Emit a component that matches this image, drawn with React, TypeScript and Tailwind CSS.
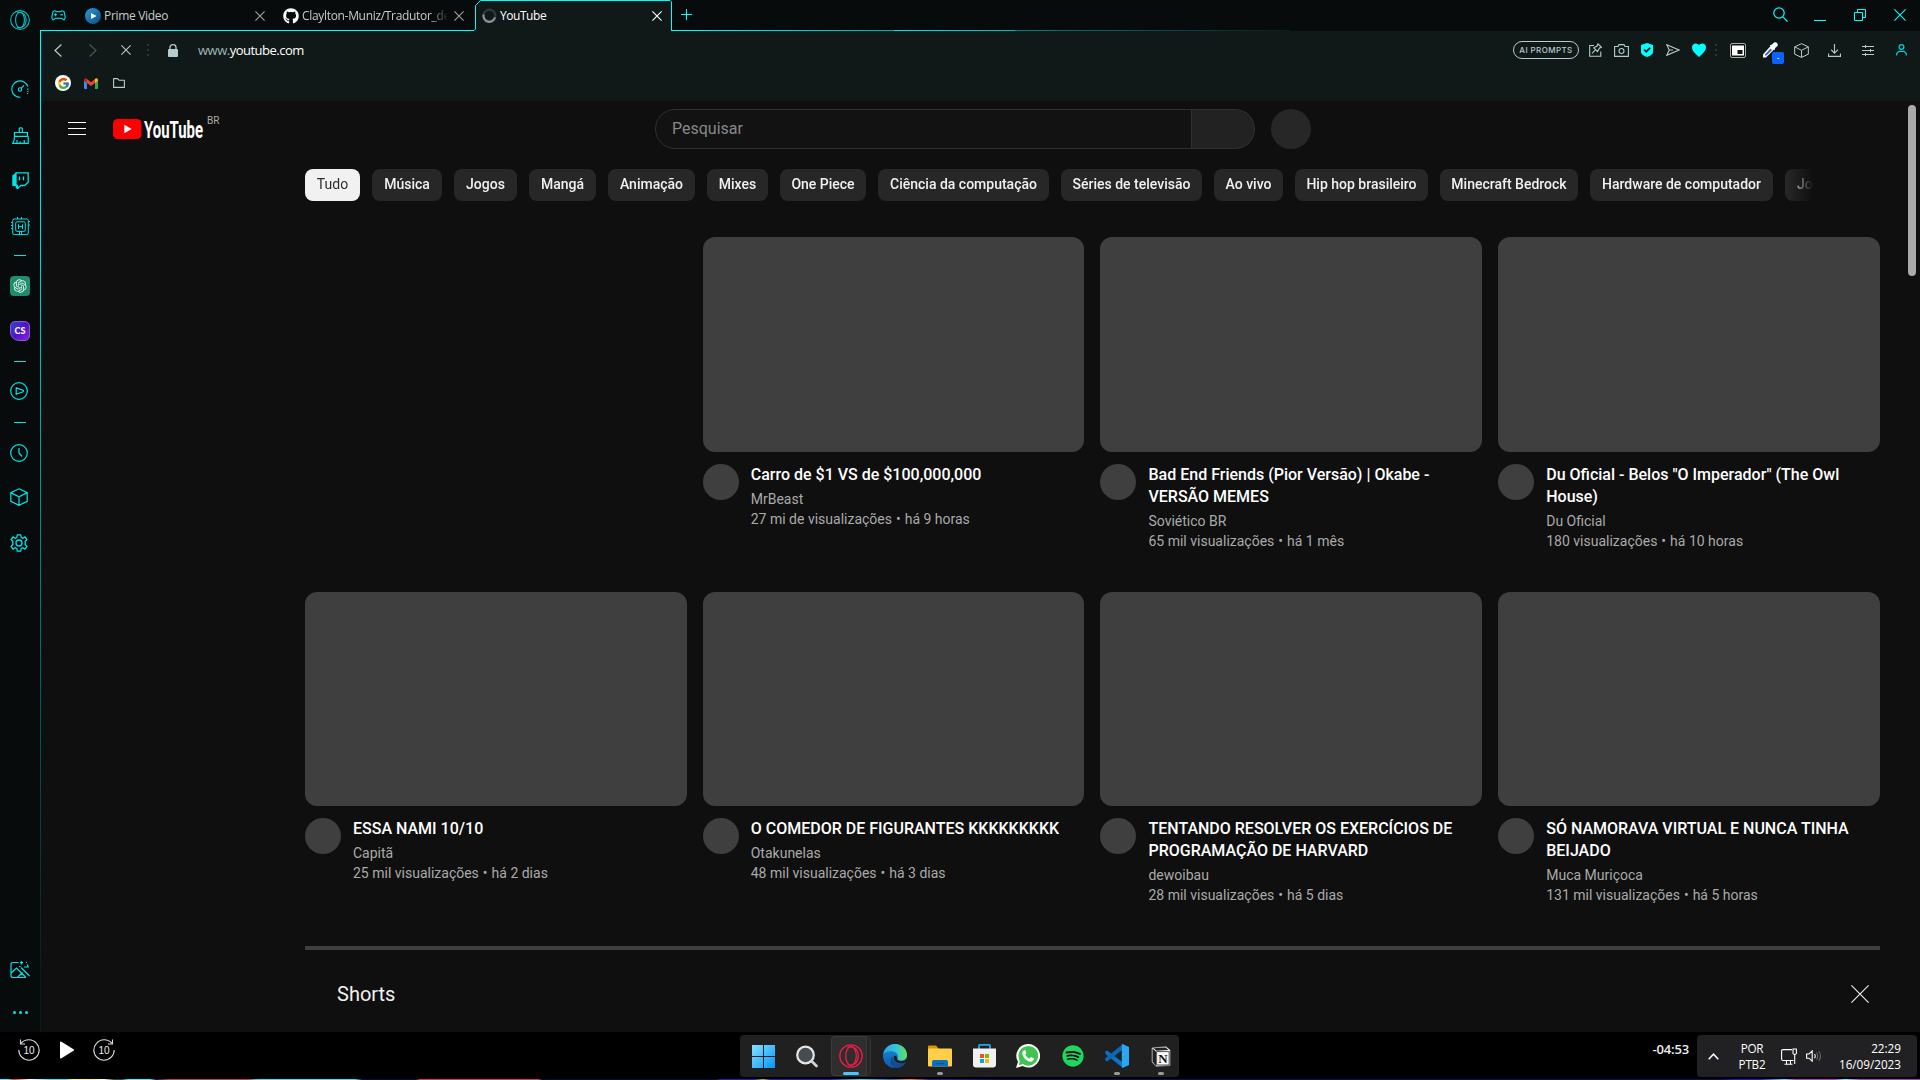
import React from "react";
import { FcGoogle } from "react-icons/fc";
import { FaGithub, FaSpotify } from "react-icons/fa";
import { RiOpenaiFill } from "react-icons/ri";

const ui = "font-['Open_Sans','Noto_Sans',sans-serif]";

function Cell({ className, children }: { className: string; children?: React.ReactNode }) {
  return <div className={`flex shrink-0 items-center justify-center ${className}`}>{children}</div>;
}

type SvgProps = { w: number; h?: number; sw?: number; className?: string; children: React.ReactNode; vb?: string };
/** Line drawing whose view box equals its pixel size. */
function Line({ w, h = w, sw = 1.1, className = "", children, vb }: SvgProps) {
  return (
    <svg width={w} height={h} viewBox={vb ?? `0 0 ${w} ${h}`} fill="none" stroke="currentColor" strokeWidth={sw} className={`shrink-0 ${className}`}>
      {children}
    </svg>
  );
}

const Dash = () => <div className="h-px w-3 bg-[#00e5e8]" />;

const Cross = ({ s = 10, sw = 1.1 }: { s?: number; sw?: number }) => (
  <Line w={s} sw={sw}>
    <path d={`M.4 .4L${s - 0.4} ${s - 0.4}M${s - 0.4} .4L.4 ${s - 0.4}`} />
  </Line>
);

const Cube = ({ s = 18 }: { s?: number }) => (
  <Line w={s} vb="0 0 18 18" sw={1.2}>
    <path d="M9 .8L17.2 4.6V13.4L9 17.3L.8 13.4V4.6ZM.8 4.6L9 8.8L17.2 4.6M9 8.8V17.3" />
  </Line>
);

const OperaRing = ({ s, className }: { s: number; className: string }) => (
  <Line w={s} vb="0 0 24 24" sw={1.3} className={className}>
    <circle cx="12" cy="12" r="11.2" />
    <ellipse cx="12" cy="12" rx="5.300" ry="9.300" />
    <path d="M8.500 3.700C13 1 19.300 4.500 19.300 12S13 23 8.500 20.300" />
  </Line>
);

function Sidebar() {
  return (
    <aside className="flex w-10 shrink-0 flex-col bg-[#070b0c] text-[#00e5e8]">
      <Cell className="h-10"><OperaRing s={20} className="text-[#00c4c8]" /></Cell>
      <Cell className="mt-[26px] h-[46px] pr-px">
        <Line w={18}>
          <path d="M9.5 17.300A8.200 8.200 0 1 1 16.800 6.500M16.900 8.500V9.900M16.900 11V12M16.500 13V14" />
          <circle cx="9" cy="9.500" r="1.7" />
          <path d="M10.200 8.200L12.900 5.500" />
        </Line>
      </Cell>
      <Cell className="h-[46px]">
        <Line w={17} sw={1.2}>
          <path d="M7.300 5.500V1.500C7.300 .7 10.300 .7 10.300 1.500V5.500M2.500 5.500H15.500V9.300H2.500ZM2.500 9.300C2.500 12.500 2 14.500 .9 16.300H16.200V9.300M5 16V13M8.200 16V14.500M12.200 16V13" />
        </Line>
      </Cell>
      <Cell className="h-[45px]">
        <Line w={17} sw={1.3}>
          <path d="M4 .8H16.200V10.200L12.500 13.500H9L5.500 16.500V13.500H4Z" />
          <path d="M.3 3.500L4 .8V12.500L6 13.500L5.500 16.500H3.800V14H.3Z" fill="currentColor" stroke="none" />
          <path d="M7.500 4.500V8.200M11.500 4.500V8.200" />
        </Line>
      </Cell>
      <Cell className="h-[46px] pl-px">
        <Line w={19} sw={1}>
          <rect x="1.700" y="2" width="15.600" height="15.600" rx="1.500" />
          <rect x="4.700" y="4.800" width="9.600" height="9.600" rx="1.500" />
          <path d="M7.500 7.300V12M11.500 7.300V12M7.500 9.600H11.500M6.500 0V2M10.500 0V2M0 5.500H1.700M0 8.500H1.700M0 11.500H1.700M17.300 4.500H19M17.300 8H19M8.500 14.400V17.500M10.500 14.400V17.500" />
        </Line>
      </Cell>
      <Cell className="h-[13px]"><Dash /></Cell>
      <Cell className="h-[47px]">
        <div className="flex size-5 items-center justify-center rounded-[4px] bg-[#1f8d6d] text-[#e3f4ee]"><RiOpenaiFill size={16} /></div>
      </Cell>
      <Cell className="h-[43px]">
        <div className="flex size-5 items-center justify-center rounded-[5px] rounded-bl-[9px] border border-[#8d55d8] bg-linear-to-br from-[#2741cf] via-[#4d12c4] to-[#8d1fdc] font-[Lato] text-[9px] font-black leading-none text-white">CS</div>
      </Cell>
      <Cell className="h-[18px]"><Dash /></Cell>
      <Cell className="h-[42px] pr-[2px]">
        <Line w={18} sw={1.2}><circle cx="9" cy="9" r="8.300" /><path d="M6.200 5.800V12.200L13.300 9.800V8.400Z" strokeLinejoin="round" /></Line>
      </Cell>
      <Cell className="h-[20px]"><Dash /></Cell>
      <Cell className="h-[41px] pr-[2px]">
        <Line w={18} sw={1.2}><circle cx="9" cy="9" r="8.300" /><path d="M9 4V9L12 12.500" /></Line>
      </Cell>
      <Cell className="h-[48px] pr-[2px]"><Cube /></Cell>
      <Cell className="h-[42px] pr-[2px] pt-px">
        <Line w={18} sw={1.3}>
          <circle cx="9" cy="9" r="3" />
          <path strokeLinejoin="round" d="M7.300 .9H10.700L11.200 3.500L12.800 4.300L15 2.900L16.900 5.500L15.200 7.500V10.500L16.900 12.500L15 15.100L12.800 13.700L11.200 14.500L10.700 17.100H7.300L6.800 14.500L5.200 13.700L3 15.100L1.100 12.500L2.800 10.500V7.500L1.100 5.500L3 2.900L5.200 4.300L6.800 3.500Z" />
        </Line>
      </Cell>
      <Cell className="mt-auto h-[44px]">
        <Line w={20} h={18} sw={1.2}>
          <path d="M8.500 1.500H3Q1 1.500 1 3.500V14.500Q1 16.500 3 16.500H16M1.200 12L6.500 7L15.500 16M7.500 16.300L12.500 11.500M11 6.500L19.500 15M17.700 3.500V6M11.500 0V3.500M10 1.700H13M16 1.500H17M9 5.500H10.500M14 6H19" />
        </Line>
      </Cell>
      <Cell className="h-10 gap-[3px]">
        <i className="size-[3px] rounded-full bg-current" /><i className="size-[3px] rounded-full bg-current" /><i className="size-[3px] rounded-full bg-current" />
      </Cell>
    </aside>
  );
}

function TabBar() {
  return (
    <div className={`relative flex h-[31px] items-center bg-[#070b0c] text-[12px] tracking-[-0.32px] text-[#c5cbcb] ${ui}`}>
      <svg className="absolute left-0 top-0" width="1260" height="31" fill="none">
        <defs>
          <linearGradient id="glow" x1="631" x2="1250" y1="0" y2="0" gradientUnits="userSpaceOnUse">
            <stop offset="0" stopColor="#00ffff" />
            <stop offset=".36" stopColor="#00a9aa" />
            <stop offset=".3601" stopColor="#00e6e8" />
            <stop offset=".555" stopColor="#00b4b4" />
            <stop offset=".5551" stopColor="#00807f" />
            <stop offset="1" stopColor="#0a1d1d" />
          </linearGradient>
        </defs>
        <path d="M435.500 31V6L440.500 .5H631V31Z" fill="#111918" />
        <path d="M0 30.500H434L435.500 29V5.500L440.500 .5H630L631.500 2V30.500" stroke="#00ffff" />
        <rect x="631" y="30" width="619" height="1" fill="url(#glow)" />
      </svg>
      <Cell className="w-[37px] text-[#00ced2]">
        <Line w={15} h={11} sw={1.2}>
          <path d="M4 .8L5.500 1.700H9.500L11 .8L13 1.500L14.300 7.500L13 10L10.500 8.300H4.500L2 10L.7 7.500L2 1.500Z" strokeLinejoin="round" />
          <path d="M4.500 3.200V6.200M3 4.700H6M10 4V5.500M11.300 4V5.500" />
        </Line>
      </Cell>
      <div className="ml-[8px] flex size-4 items-center justify-center rounded-full bg-linear-to-br from-[#2b9ddd] to-[#0c4b80]">
        <svg width="7" height="8"><path d="M1 1L6.500 4L1 7Z" fill="#fff" /></svg>
      </div>
      <span className="ml-[3px] w-[150px]">Prime Video</span>
      <Cell className="w-[12px] text-[#9aa3a3]"><Cross /></Cell>
      <FaGithub size={16} className="ml-[17px] text-white" />
      <span className="ml-[3px] w-[146px] overflow-hidden whitespace-nowrap tracking-[-0.32px] mask-r-from-88% mask-r-to-100%">Claylton-Muniz/Tradutor_de</span>
      <Cell className="ml-[5px] w-[12px] text-[#9aa3a3]"><Cross /></Cell>
      <div className="relative ml-[17px] flex w-[189px] items-center text-white">
        <svg width="15" height="15" fill="none" strokeWidth="2.2"><circle cx="7.500" cy="7.500" r="5.800" stroke="#303a39" /><path d="M1.700 6.500A5.800 5.800 0 0 0 13 9.500" stroke="#8c9493" /></svg>
        <span className="ml-[3px] w-[151px] tracking-[-0.45px]">YouTube</span>
        <Cell className="w-[12px]"><Cross /></Cell>
      </div>
      <Cell className="relative w-[30px] pb-[3px] text-[#00ffff]"><Line w={11} sw={1}><path d="M0 5.500H11M5.500 0V11" /></Line></Cell>
      <div className="ml-auto flex h-full text-[#00ffff]">
        <Cell className="w-10 pb-[3px]"><Line w={15} sw={1.2}><circle cx="6" cy="6" r="5.200" /><path d="M9.800 9.800L14.500 14.500" /></Line></Cell>
        <Cell className="w-10 pt-[10px]"><div className="h-px w-3 bg-current" /></Cell>
        <Cell className="w-10 pb-px"><Line w={12} sw={1}><path d="M.5 3.500H8.500V11.500H.5ZM3.500 3.500V.5H11.500V8.500H8.500" /></Line></Cell>
        <Cell className="w-10 pb-px"><Cross s={12} /></Cell>
      </div>
    </div>
  );
}

const Dots = ({ className }: { className: string }) => (
  <Cell className={`flex-col gap-[3px] ${className}`}>
    <i className="size-[2px] bg-[#293634]" /><i className="size-[2px] bg-[#293634]" /><i className="size-[2px] bg-[#293634]" />
  </Cell>
);

function Toolbar() {
  return (
    <div className="flex h-[70px] shrink-0 flex-col bg-[#111918] text-[#b4cccb]">
      <div className="flex h-[38px] items-center">
        <Cell className="w-[34px]"><Line w={8} h={13} sw={1.2}><path d="M7.400 .5L1 6.500L7.400 12.500" /></Line></Cell>
        <Cell className="w-[36px] text-[#495554]"><Line w={8} h={13} sw={1.2}><path d="M.6 .5L7 6.500L.6 12.500" /></Line></Cell>
        <Cell className="w-[30px]"><Cross s={10} /></Cell>
        <Dots className="w-[14px]" />
        <Cell className="w-[36px]">
          <svg width="10" height="13" fill="currentColor"><rect y="5" width="10" height="8" rx="1" /><path d="M2 6V3.500Q2 .7 5 .7T8 3.500V6" fill="none" stroke="currentColor" strokeWidth="1.300" /></svg>
        </Cell>
        <span className={`ml-[7px] pt-px text-[13px] tracking-[-0.5px] text-[#9db5b4] ${ui}`}>www.<span className="text-white">youtube.com</span></span>
        <div className="ml-auto flex items-center pr-[4px]">
          <div className="mr-[3px] flex h-[18px] w-[66px] items-center justify-center rounded-full border border-[#b4cccb] font-[Inter] text-[8px] font-medium tracking-[0.4px]">AI PROMPTS</div>
          <Cell className="w-[26px]"><Line w={13} h={14}><path d="M5 2.500H.7V13.200H11.800V8.500M9 .8L12.500 4.300L10.500 5L8.500 8.500L4.800 4.800L8.300 2.800ZM6.600 6.700L3 10.300" /></Line></Cell>
          <Cell className="w-[26px]"><Line w={15} h={13}><path d="M.6 2.500H4L5 .6H10L11 2.500H14.400V12.400H.6Z" /><circle cx="7.500" cy="7" r="2.500" /></Line></Cell>
          <Cell className="w-[26px]"><svg width="12" height="14"><path d="M6 0L12 2V9Q12 12 6 14Q0 12 0 9V2Z" fill="#00ffff" /><path d="M3 6.500L5.200 8.700L9.200 4.700" fill="none" stroke="#111918" strokeWidth="1.700" /></svg></Cell>
          <Cell className="w-[26px]"><Line w={14} h={12}><path d="M.8 .7L13 6L.8 11.300L3.200 6ZM3.200 6H7" /></Line></Cell>
          <Cell className="w-[26px]"><svg width="14" height="14"><path d="M7 14C2.500 10 0 7.500 0 4.300C0 1.800 1.800 .5 3.700 .5C5.200 .5 6.300 1.300 7 2.300C7.700 1.300 8.800 .5 10.300 .5C12.200 .5 14 1.800 14 4.300C14 7.500 11.500 10 7 14Z" fill="#00ffff" /></svg></Cell>
          <Dots className="w-[8px]" />
          <Cell className="w-[36px]"><svg width="16" height="15"><rect x=".5" y=".5" width="15" height="14" rx="1.500" fill="#111" stroke="#aaa" /><rect x="2" y="2.500" width="12" height="10" fill="#fff" /><rect x="7.500" y="7" width="5" height="4" fill="#111" /></svg></Cell>
          <Cell className="relative w-[28px]">
            <svg width="16" height="16"><path d="M9 3.500L12.500 7L4 15.500H1V12.500Z" fill="#fff" /><path d="M8.500 6.500L10 8L4.500 13.500H3V12.500Z" fill="#3565b8" /><path d="M7.800 3.200L10 2.500L12 .5Q14 -.2 15.200 1.200T15.300 4.200L13.200 6L12.500 8.200Z" fill="#fff" /></svg>
            <span className="absolute left-4 top-[10px] flex size-3 items-center justify-center rounded-[2px] bg-[#0d63ff] text-[8px] leading-none text-white">-</span>
          </Cell>
          <Cell className="w-[34px]"><Cube s={15} /></Cell>
          <Cell className="w-[32px]"><Line w={13} h={13}><path d="M6.500 0V9M3 5.700L6.500 9.200L10 5.700M.5 9.500V12.400H12.500V9.500" /></Line></Cell>
          <Cell className="w-[36px]"><Line w={12} h={11} sw={1}><path d="M0 1.500H12M0 5.500H12M0 9.500H12M3.500 0V3M8.500 4V7M3.500 8V11" /></Line></Cell>
          <Cell className="w-[30px] text-[#00d2d4]"><Line w={11} h={12} sw={1.2}><circle cx="5.500" cy="3" r="2.400" /><path d="M.7 11.500V9.500L3 7.300H8L10.300 9.500V11.500" /></Line></Cell>
        </div>
      </div>
      <div className="flex h-7 items-center pl-[14px]">
        <div className="flex size-4 items-center justify-center rounded-full bg-white"><FcGoogle size={13} /></div>
        <svg width="14" height="11" viewBox="0 0 14 11" className="ml-[13px]">
          <path d="M0 2V10Q0 11 1 11H3V4.500Z" fill="#4285f4" /><path d="M14 2V10Q14 11 13 11H11V4.500Z" fill="#34a853" />
          <path d="M3 1L7 4.200L11 1V5L7 8L3 5Z" fill="#ea4335" /><path d="M0 2Q0 0 2 .2L3 1V5L0 2.800Z" fill="#c5221f" /><path d="M14 2Q14 0 12 .2L11 1V5L14 2.800Z" fill="#fbbc04" />
        </svg>
        <Line w={12} h={10} className="ml-[15px]"><path d="M.6 9.400V.6H4.500L6 2.200H11.400V9.400Z" strokeLinejoin="round" /></Line>
      </div>
    </div>
  );
}

function Masthead() {
  return (
    <header className="flex h-14 shrink-0 items-center pl-[27px]">
      <div className="mb-[2px] flex h-[13px] w-[18px] flex-col justify-between"><i className="h-px bg-white" /><i className="h-px bg-white" /><i className="h-px bg-white" /></div>
      <svg width="91" height="30" className="ml-[27px]">
        <rect y="5" width="28.500" height="20" rx="4.500" fill="#f00" /><path d="M11.300 10.700V19.300L18.700 15Z" fill="#fff" />
        <text x="31" y="23.500" fontFamily="Roboto" fontWeight="700" fontSize="24" fill="#fff" textLength="59" lengthAdjust="spacingAndGlyphs">YouTube</text>
      </svg>
      <span className="mb-[17px] ml-[3px] w-[13px] text-[10px] leading-none text-[#aaa]">BR</span>
      <div className="ml-[435px] flex h-10 w-[600px]">
        <div className="flex w-[537px] items-center rounded-l-full border border-[#303030] bg-[#121212] pl-4 text-[16px] text-[#888]">Pesquisar</div>
        <div className="w-[63px] rounded-r-full border border-l-0 border-[#303030] bg-[#222]" />
      </div>
      <div className="ml-4 size-10 rounded-full bg-[#272727]" />
    </header>
  );
}

const chips: [string, string][] = [
  ["Música", "w-[70px]"], ["Jogos", "w-[63px]"], ["Mangá", "w-[67px]"], ["Animação", "w-[87px]"], ["Mixes", "w-[61px]"],
  ["One Piece", "w-[86px]"], ["Ciência da computação", "w-[171px]"], ["Séries de televisão", "w-[141px]"], ["Ao vivo", "w-[69px]"],
  ["Hip hop brasileiro", "w-[133px]"], ["Minecraft Bedrock", "w-[138px]"], ["Hardware de computador", "w-[183px]"], ["Jogos", "w-[63px]"],
];

type Video = { title: string; channel: string; views: string; age: string };
const videos: (Video | null)[] = [
  null,
  { title: "Carro de $1 VS de $100,000,000", channel: "MrBeast", views: "27 mi de visualizações", age: "há 9 horas" },
  { title: "Bad End Friends (Pior Versão) | Okabe -\nVERSÃO MEMES", channel: "Soviético BR", views: "65 mil visualizações", age: "há 1 mês" },
  { title: "Du Oficial - Belos \"O Imperador\" (The Owl\nHouse)", channel: "Du Oficial", views: "180 visualizações", age: "há 10 horas" },
  { title: "ESSA NAMI 10/10", channel: "Capitã", views: "25 mil visualizações", age: "há 2 dias" },
  { title: "O COMEDOR DE FIGURANTES KKKKKKKKK", channel: "Otakunelas", views: "48 mil visualizações", age: "há 3 dias" },
  { title: "TENTANDO RESOLVER OS EXERCÍCIOS DE\nPROGRAMAÇÃO DE HARVARD", channel: "dewoibau", views: "28 mil visualizações", age: "há 5 dias" },
  { title: "SÓ NAMORAVA VIRTUAL E NUNCA TINHA\nBEIJADO", channel: "Muca Muriçoca", views: "131 mil visualizações", age: "há 5 horas" },
];

function VideoCard({ video }: { video: Video | null }) {
  if (!video) return <div />;
  return (
    <article>
      <div className="h-[214.700px] rounded-xl bg-[#3f3f3f]" />
      <div className="mt-3 flex gap-3">
        <div className="size-9 shrink-0 rounded-full bg-[#3f3f3f]" />
        <div className="whitespace-pre">
          <h3 className="text-[16px] font-medium leading-[22px] text-white">{video.title}</h3>
          <p className="mt-[3px] text-[14px] leading-5 text-[#aaa]">{video.channel}</p>
          <p className="text-[14px] leading-5 text-[#aaa]">{video.views}<span className="mx-1">•</span>{video.age}</p>
        </div>
      </div>
    </article>
  );
}

function Page() {
  return (
    <main className="flex min-h-0 flex-1 bg-[#0f0f0f] font-[Roboto,sans-serif]">
      <div className="flex w-[1867px] flex-col overflow-hidden">
        <Masthead />
        <div className="ml-[264px] mt-3 flex w-[1508px] shrink-0 gap-3 overflow-hidden text-[14px] font-medium leading-5 text-[#f1f1f1] mask-r-from-[1482px] mask-r-to-[1508px]">
          <div className="flex h-8 w-[55px] shrink-0 items-center justify-center rounded-lg bg-[#f1f1f1] pb-[3px] font-normal text-[#2c2c2c]">Tudo</div>
          {chips.map(([label, width], i) => (
            <div key={i} className={`flex h-8 shrink-0 items-center justify-center whitespace-nowrap rounded-lg bg-[#272727] pb-[3px] ${width}`}>{label}</div>
          ))}
        </div>
        <div className="ml-[264px] mt-9 grid h-[709px] w-[1575px] shrink-0 grid-cols-[repeat(4,381.700px)] grid-rows-[354.500px_354.500px] gap-x-[16.050px]">
          {videos.map((v, i) => <VideoCard key={i} video={v} />)}
        </div>
        <div className="ml-[264px] h-1 w-[1575px] shrink-0 bg-[#3f3f3f]" />
        <div className="ml-[296px] mr-[39px] flex h-[88px] shrink-0 items-center justify-between text-[#f1f1f1]">
          <h2 className="text-[20px]">Shorts</h2>
          <Cross s={18} />
        </div>
      </div>
      <div className="mt-1 h-[171px] w-2 rounded-full bg-[#aaa]" />
    </main>
  );
}

const Skip = ({ back = false }: { back?: boolean }) => (
  <svg width="22" height="22" fill="none" stroke="#ddd" strokeWidth="1.100">
    <path transform={back ? undefined : "translate(22 0) scale(-1 1)"} d="M3.200 4.200A10.200 10.200 0 0 1 18.500 4.300M.8 11A10.200 10.200 0 0 0 21.200 11M21.200 11Q21 7 18.500 4.300M2.500 .5V5H7" />
    <text x="11" y="14.500" textAnchor="middle" fontSize="10" fontFamily="Liberation Sans" fill="#eee" stroke="none">10</text>
  </svg>
);

function TaskItem({ children, running }: { children: React.ReactNode; running?: boolean }) {
  return (
    <div className="relative flex h-[42px] w-11 items-center justify-center">
      {children}
      {running && <span className="absolute bottom-[2px] h-[3px] w-[6px] rounded-full bg-[#9a9a9a]" />}
    </div>
  );
}

function Taskbar() {
  return (
    <footer className="flex h-12 flex-col bg-black">
      <div className="flex h-[47px] items-start">
        <div className="flex h-9 w-[740px] items-center pl-[18px]">
          <Skip back />
          <svg width="14" height="18" className="ml-5"><path d="M0 1.500Q0 0 1.500 .7L13.500 8.200Q14.500 9 13.500 9.800L1.500 17.300Q0 18 0 16.500Z" fill="#fff" /></svg>
          <span className="ml-[19px]"><Skip /></span>
        </div>
        <div className="mt-[3px] flex h-[42px] w-[439px] rounded-[4px] bg-[#202020]">
          <div className="ml-px flex shrink-0">
            <TaskItem>
              <svg width="23" height="23"><defs><linearGradient id="win" x1="0" y1="0" x2="1" y2="1"><stop stopColor="#86e0ff" /><stop offset="1" stopColor="#0596f7" /></linearGradient></defs><path d="M0 0H11V11H0ZM12 0H23V11H12ZM0 12H11V23H0ZM12 12H23V23H12Z" fill="url(#win)" /></svg>
            </TaskItem>
            <TaskItem>
              <svg width="22" height="23" fill="none" strokeLinecap="round"><circle cx="9.500" cy="10" r="8.300" fill="#484c4e" stroke="#e4e7e8" strokeWidth="2.200" /><path d="M16 16.500L20.500 21" stroke="#cfd6da" strokeWidth="2.600" /></svg>
            </TaskItem>
            <div className="relative flex h-[42px] w-11 items-center justify-center">
              <div className="absolute left-[2px] top-px h-10 w-[40px] rounded-[4px] border border-[#363636] bg-[#262626]" />
              <div className="absolute left-[2px] top-px h-10 w-[36px] rounded-[4px] border border-[#3b3b3b] bg-[#2e2e2f]" />
              <OperaRing s={24} className="relative text-[#ee1c46]" />
              <span className="absolute bottom-[2px] left-[14px] h-[3px] w-4 rounded-full bg-[#4cc2ff]" />
            </div>
            <TaskItem>
              <svg width="24" height="24" viewBox="0 0 24 24">
                <defs>
                  <linearGradient id="edgeTop" x1="0" x2="1"><stop stopColor="#2aa6e0" /><stop offset=".5" stopColor="#33c3dc" /><stop offset="1" stopColor="#63e05a" /></linearGradient>
                  <linearGradient id="edgeLow" x1="0" y1="0" x2="0" y2="1"><stop stopColor="#1b8fdc" /><stop offset="1" stopColor="#0c59a8" /></linearGradient>
                </defs>
                <circle cx="12" cy="12" r="12" fill="url(#edgeLow)" />
                <path d="M.3 10C1.500 4 6.500 0 12 0C19 0 24 5 24 11C24 14.500 21.500 16.500 18.500 16.500C15 16.500 14 15.200 14.500 14.200C15.500 12.500 15 8.500 10 7.500C5.500 6.800 2 8.500 .3 10Z" fill="url(#edgeTop)" />
                <path d="M9.500 12C8.500 18 14 21 21.800 18.800Q22.800 18.700 22 19.800C19 23.500 15 24 12.500 24C8 22 5.500 17 9.500 12Z" fill="#134a92" />
                <path d="M14.500 14.200C13.500 15.500 15 17 18.500 17Q21.500 17 24 14.500L23 18L20.500 19C14 20 9.500 17 11 12.500Q12.500 10.500 14.500 14.200Z" fill="#202020" />
              </svg>
            </TaskItem>
          </div>
          <div className="ml-px flex shrink-0">
            <TaskItem running>
              <svg width="24" height="22"><path d="M0 1.500Q0 .5 1 .5H8L10.500 3.500V8H0Z" fill="#dc9500" /><rect y="3.500" width="24" height="18" rx="1" fill="#ffcf48" /><path d="M4 21.500V17Q4 15 6 15H18Q20 15 20 17V21.500Z" fill="#0a70c0" /><rect x="8" y="18" width="8" height="1.200" fill="#05508f" /></svg>
            </TaskItem>
            <TaskItem>
              <svg width="23" height="24"><path d="M6 5V2Q6 .8 7 .8H16Q17 .8 17 2V5" fill="none" stroke="#1fa6f0" strokeWidth="1.800" /><path d="M0 4.500H23V20.500Q23 23.500 20 23.500H3Q0 23.500 0 20.500Z" fill="#f1f1f1" /><path d="M7 10H11V14H7Z" fill="#f25022" /><path d="M12 10H16V14H12Z" fill="#7fba00" /><path d="M7 15H11V19H7Z" fill="#00a4ef" /><path d="M12 15H16V19H12Z" fill="#ffb900" /></svg>
            </TaskItem>
            <TaskItem>
              <svg width="24" height="24"><path d="M12.300 0A11.800 11.800 0 1 1 6.500 22.100L0 24L2 17.800A11.800 11.800 0 0 1 12.300 0Z" fill="#fff" /><circle cx="12.300" cy="11.800" r="9.900" fill="#40c351" /><path d="M2.700 21.300L4 16.500L7.500 20Z" fill="#40c351" /><path d="M8.500 6Q6 7 6.300 9.500C7 14 11 17.300 14.500 17.700Q17.500 17.500 18 14.500L15 13L13.500 14.700Q10.500 13.500 9.200 10.500L10.300 9L9.300 6.200Z" fill="#fff" /></svg>
            </TaskItem>
          </div>
          <div className="ml-px flex shrink-0">
            <TaskItem><div className="flex size-[22px] items-center justify-center rounded-full bg-[#111]"><FaSpotify size={22} className="text-[#1ed760]" /></div></TaskItem>
            <TaskItem running>
              <svg width="24" height="24"><path d="M0 8L2 6.500L18 18.500V24L1 10.500Z" fill="#0b74c8" /><path d="M0 16L2 17.500L18 5.500V0L.5 14Z" fill="#0a68b6" /><path d="M17.500 0L24 3V21L17.500 24L16.800 23V1Z" fill="#2aa6f2" /></svg>
            </TaskItem>
            <TaskItem running>
              <svg width="20" height="21"><path d="M1 2L15 .7L19 4V19.500L5 20.300L1 16Z" fill="#fff" stroke="#aaa" strokeWidth=".7" /><path d="M1.500 2.500L5 5.500V20L1.500 15.500ZM2.500 2.300L14.500 1.400L17.500 4L5.500 4.700Z" fill="#222" /><rect x="5.700" y="5.700" width="12.400" height="13.300" fill="#fff" stroke="#222" strokeWidth=".8" /><text x="12" y="16.800" textAnchor="middle" fontFamily="Liberation Serif" fontWeight="700" fontSize="13" fill="#111">N</text></svg>
            </TaskItem>
          </div>
        </div>
        <span className="ml-auto mr-[8px] mt-[7px] font-['Open_Sans',sans-serif] text-[13px] font-semibold leading-5 tracking-[-0.15px] text-[#eee]">-04:53</span>
        <div className={`mr-[3px] mt-[3px] flex h-[42px] w-[220px] items-center rounded-[4px] bg-[#212123] text-[11.700px] leading-4 text-white ${ui}`}>
          <Cell className="w-[33px]"><Line w={11} h={7} sw={1.5}><path d="M.7 6.200L5.500 1.200L10.300 6.200" /></Line></Cell>
          <div className="w-[44px] text-center tracking-[-0.2px]">POR<br />PTB2</div>
          <Cell className="w-[30px]"><Line w={16} h={17}><path d="M11 1.600H2Q.6 1.600 .6 3V11Q.6 12.500 2 12.500H12.500M5.500 12.500V16M9.500 12.500V16M3.500 16.300H11.500M12 1H15.400V5.500Q13.700 7.500 12 5.500ZM13.700 6.500V16" /></Line></Cell>
          <Cell className="w-[20px]"><Line w={16} h={12}><path d="M.6 4V8.200H3L6.200 11.200V.9L3 4ZM8.500 4Q10 6 8.500 8.200" /><path d="M10.500 2.500Q13 6 10.500 9.500M12.700 1Q16.300 6 12.700 11" stroke="#68686a" /></Line></Cell>
          <div className="ml-auto mr-4 text-right">22:29<br />16/09/2023</div>
        </div>
      </div>
      <div className="h-px bg-[linear-gradient(90deg,#2ff_0_8px,#e33_14px,#fff_30px,#2ee_50px_66px,#ff2_72px_92px,#fff_104px,#344_114px_122px,#2ff_128px_150px,#214_156px,#c13a62_170px_248px,#2ee_258px_355px,#0a0a38_362px_416px,#e03360_420px_538px,#0a0a30_542px_716px,#3618b0_720px_755px,#9c4_763px,#3618b0_770px_830px,#3de_860px,#36b_890px,#e84_910px,#3018a0_930px_950px,#101048_1000px_1720px,#31c_1735px_1760px,#6df_1785px,#b3d_1795px_1835px,#6fe_1845px,#b3d_1860px,#a3c_1920px)]" />
    </footer>
  );
}

export default function App() {
  return (
    <div className="flex h-[1080px] w-[1920px] flex-col overflow-hidden bg-black">
      <div className="flex h-[1032px]">
        <Sidebar />
        <div className="relative flex w-[1880px] flex-col">
          <TabBar />
          <div className="flex min-h-0 flex-1">
            <div className="w-px shrink-0 bg-[linear-gradient(180deg,#00ffff,#00e0e0_190px,#009c9c_430px,#006262_650px,#0a1b1c_950px)]" />
            <div className="flex min-w-0 flex-1 flex-col">
              <Toolbar />
              <Page />
            </div>
          </div>
        </div>
      </div>
      <Taskbar />
    </div>
  );
}
